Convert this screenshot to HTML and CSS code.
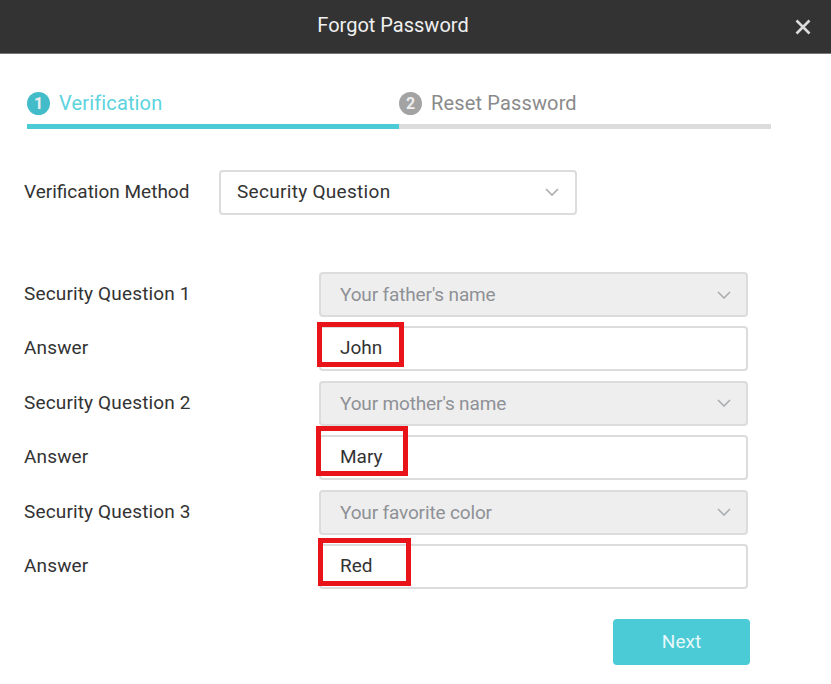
FILE: index.html
```html
<!DOCTYPE html>
<html lang="en">
<head>
<meta charset="utf-8">
<title>Forgot Password</title>
<link rel="stylesheet" href="styles.css">
</head>
<body>
<header class="titlebar">
  <h1 class="title">Forgot Password</h1>
  <button class="close" aria-label="Close">
    <svg viewBox="0 0 16 16" width="16" height="16"><path d="M1.5 1.5 14.5 14.5M14.5 1.5 1.5 14.5" fill="none" stroke="#dcdcdc" stroke-width="2.6"/></svg>
  </button>
</header>
<main class="content">
  <div class="steps">
    <div class="step active"><span class="num">1</span><span class="step-label">Verification</span></div>
    <div class="step"><span class="num">2</span><span class="step-label">Reset Password</span></div>
  </div>
  <div class="method">
    <span class="label">Verification Method</span>
    <div class="field method-field"><span>Security Question</span>
      <svg class="chev" viewBox="0 0 14 8" width="14" height="8"><path d="M1 1 7 7 13 1" fill="none" stroke="#a9adb0" stroke-width="1.6"/></svg>
    </div>
  </div>
  <div class="questions">
    <span class="label">Security Question 1</span>
    <div class="field disabled"><span>Your father's name</span>
      <svg class="chev" viewBox="0 0 14 8" width="14" height="8"><path d="M1 1 7 7 13 1" fill="none" stroke="#a9adb0" stroke-width="1.6"/></svg>
    </div>
    <span class="label">Answer</span>
    <div class="field"><span>John</span><i class="mark mark-john"></i></div>
    <span class="label">Security Question 2</span>
    <div class="field disabled"><span>Your mother's name</span>
      <svg class="chev" viewBox="0 0 14 8" width="14" height="8"><path d="M1 1 7 7 13 1" fill="none" stroke="#a9adb0" stroke-width="1.6"/></svg>
    </div>
    <span class="label">Answer</span>
    <div class="field"><span>Mary</span><i class="mark mark-mary"></i></div>
    <span class="label">Security Question 3</span>
    <div class="field disabled"><span>Your favorite color</span>
      <svg class="chev" viewBox="0 0 14 8" width="14" height="8"><path d="M1 1 7 7 13 1" fill="none" stroke="#a9adb0" stroke-width="1.6"/></svg>
    </div>
    <span class="label">Answer</span>
    <div class="field"><span>Red</span><i class="mark mark-red"></i></div>
  </div>
  <div class="actions"><button class="next">Next</button></div>
</main>
</body>
</html>
```
FILE: styles.css
```css
* { box-sizing: border-box; }
html, body { margin: 0; padding: 0; }
body {
  width: 831px;
  height: 684px;
  overflow: hidden;
  background: #fff;
  font-family: Roboto, "Liberation Sans", sans-serif;
  font-size: 19px;
  color: #333;
}
.titlebar {
  height: 54px;
  background: #333;
  border-bottom: 1px solid #777;
  display: flex;
  align-items: center;
  justify-content: center;
  position: relative;
}
.title {
  margin: 0 0 3px -45px;
  font-size: 20px;
  font-weight: 400;
  color: #f0f0f0;
}
.close {
  position: absolute;
  right: 20px;
  top: 19px;
  width: 16px;
  height: 16px;
  padding: 0;
  border: 0;
  background: none;
  display: flex;
}
.content { padding: 38px 60px 0 24px; }
.steps { display: flex; margin-left: 3px; width: 744px; }
.step {
  flex: 1;
  height: 37px;
  display: flex;
  align-items: flex-start;
  gap: 9px;
  border-bottom: 5px solid #dcdcdc;
  color: #8a8a8a;
}
.step.active { border-bottom-color: #4acbd6; color: #5cd3dd; }
.num {
  width: 23px;
  height: 23px;
  border-radius: 50%;
  background: #a3a3a3;
  color: #eee;
  font-size: 16px;
  font-weight: 700;
  display: flex;
  align-items: center;
  justify-content: center;
}
.step.active .num { background: #43bcc9; }
.step-label { line-height: 23px; font-size: 20px; letter-spacing: 0.15px; }
.method {
  margin-top: 41px;
  display: flex;
  align-items: center;
  gap: 29px;
}
.label { line-height: 43px; height: 45px; width: 166px; white-space: nowrap; }
.questions .label { letter-spacing: 0.15px; }
.field {
  height: 45px;
  border: 2px solid #dcdcdc;
  border-radius: 4px;
  background: #fff;
  display: flex;
  align-items: center;
  justify-content: space-between;
  padding: 0 15px 2px 19px;
  position: relative;
}
.method-field { width: 358px; padding-left: 16px; padding-right: 16px; letter-spacing: 0.3px; }
.disabled { background: #eee; color: #8e9196; padding-bottom: 0; letter-spacing: -0.15px; }
.questions {
  margin-top: 57px;
  display: grid;
  grid-template-columns: 295px 429px;
  row-gap: 9.4px;
}
.mark {
  position: absolute;
  border: 5px solid #e8141a;
}
.mark-john { left: -4px; top: -6px; width: 87px; height: 45px; }
.mark-mary { left: -5px; top: -11px; width: 92px; height: 50px; }
.mark-red { left: -3px; top: -8px; width: 93px; height: 48px; }
.actions { display: flex; justify-content: flex-end; margin-top: 30px; width: 726px; }
.next {
  width: 137px;
  height: 46px;
  border: 0;
  border-radius: 4px;
  background: #4acbd6;
  color: #e6f8fa;
  font: inherit;
}
```
